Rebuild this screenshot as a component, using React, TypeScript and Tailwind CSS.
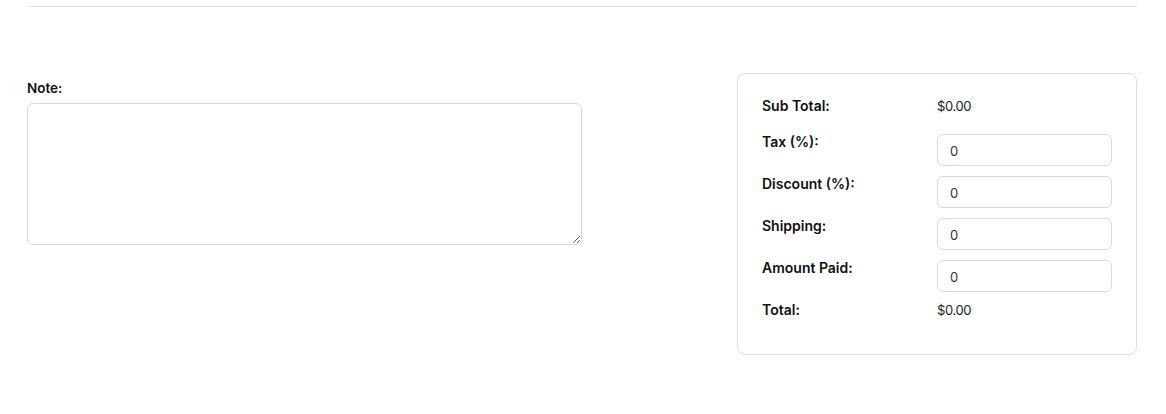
import React from "react";

const rows = [
  { label: "Tax (%):" },
  { label: "Discount (%):" },
  { label: "Shipping:" },
  { label: "Amount Paid:" },
];

export default function App() {
  return (
    <div className="min-h-[414px] bg-white text-[#111] font-['Inter','Noto_Sans',sans-serif]">
      <div className="ml-[27px] w-[1110px] pt-[6px]">
        <div className="border-t border-[#e2e0ea]" />
        <div className="mt-[66px] flex items-start justify-between">
          <div className="w-[555px] pt-[5px]">
            <label className="block text-[13.5px] font-semibold leading-[20px] text-[#111]">Note:</label>
            <textarea className="mt-[5px] block h-[142px] w-full rounded-[6px] border border-[#d9d8df] bg-white outline-none" />
          </div>
          <div className="w-[400px] rounded-[8px] border border-[#dedce6] px-6 pt-6 pb-[26px]">
            <div className="flex flex-col gap-[10px]">
              <div className="grid h-[26px] grid-cols-2 items-start">
                <span className="text-[14px] font-semibold leading-[16px]">Sub Total:</span>
                <span className="text-[13px] leading-[16px] tracking-[-0.03em] text-[#222]">$0.00</span>
              </div>
              {rows.map((r) => (
                <div key={r.label} className="grid grid-cols-2 items-start">
                  <span className="text-[14px] font-semibold leading-[16px]">{r.label}</span>
                  <input
                    defaultValue="0"
                    className="h-[32px] w-full rounded-[6px] border border-[#d9d8df] px-3 pt-[2px] text-[13px] text-[#333] outline-none"
                  />
                </div>
              ))}
              <div className="grid h-[26px] grid-cols-2 items-start">
                <span className="text-[14px] font-semibold leading-[16px]">Total:</span>
                <span className="text-[13px] leading-[16px] tracking-[-0.03em] text-[#222]">$0.00</span>
              </div>
            </div>
          </div>
        </div>
      </div>
    </div>
  );
}
